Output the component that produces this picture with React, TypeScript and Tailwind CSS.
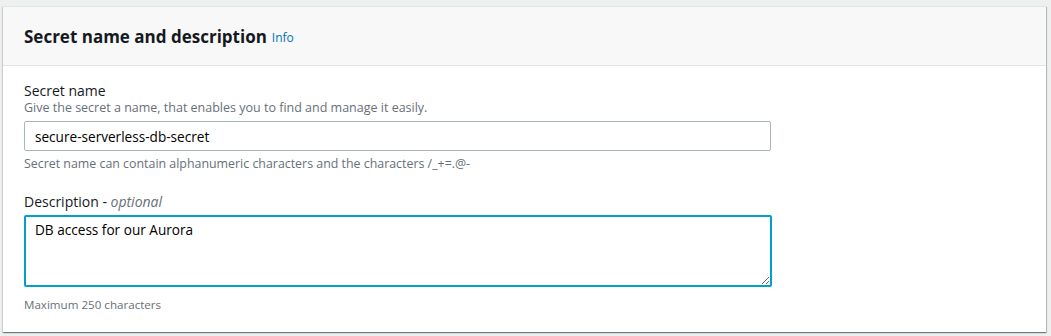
import { useState } from 'react';

const FONT = { fontFamily: '"Open Sans", "Liberation Sans", Arial, sans-serif' };

export default function App() {
  const [name, setName] = useState('secure-serverless-db-secret');
  const [desc, setDesc] = useState('DB access for our Aurora');

  return (
    <div className="min-h-[336px] bg-[#eef0f0] pl-[3px] pr-[5px] pt-[6px]" style={FONT}>
      <section className="border-t border-[#e1e4e4] bg-white shadow-[0_1px_1px_0_rgba(0,28,36,0.35),1px_1px_1px_0_rgba(0,28,36,0.2),-1px_1px_1px_0_rgba(0,28,36,0.1)]">
        {/* header */}
        <div className="flex h-[59px] items-center border-b border-[#e1e4e4] bg-[#f8f8f8] px-[21px]">
          <h2 className="text-[17px] font-bold leading-none text-[#16191f]">
            Secret name and description
          </h2>
          <a href="#" className="ml-[5px] mt-[3px] text-[12px] text-[#0073bb]">
            Info
          </a>
        </div>

        {/* body */}
        <div className="px-[21px] pb-[19px] pt-[16px] text-[#16191f]">
          <label className="block text-[14px] leading-[18px]">Secret name</label>
          <p className="text-[12.5px] leading-[15px] text-[#687078]">
            Give the secret a name, that enables you to find and manage it easily.
          </p>
          <input
            value={name}
            onChange={(e) => setName(e.target.value)}
            className="mt-[6px] block h-[30px] w-[747px] rounded-[2px] border border-[#aab7b8] px-[10px] text-[13.6px] text-black outline-none"
          />
          <p className="mt-[5px] text-[12.4px] leading-[16px] text-[#687078]">
            Secret name can contain alphanumeric characters and the characters /_+=.@-
          </p>

          <label className="mt-[21px] block text-[14px] leading-[18px]">
            Description - <i className="text-[#687078]">optional</i>
          </label>
          <textarea
            value={desc}
            onChange={(e) => setDesc(e.target.value)}
            className="mt-[4px] block h-[72px] w-[748px] rounded-[2px] border-2 border-[#00a1c9] px-[9px] py-[3px] text-[13.6px] leading-[20px] text-black outline-none"
          />
          <p className="mt-[10px] text-[11.6px] leading-[16px] text-[#687078]">
            Maximum 250 characters
          </p>
        </div>
      </section>
    </div>
  );
}
